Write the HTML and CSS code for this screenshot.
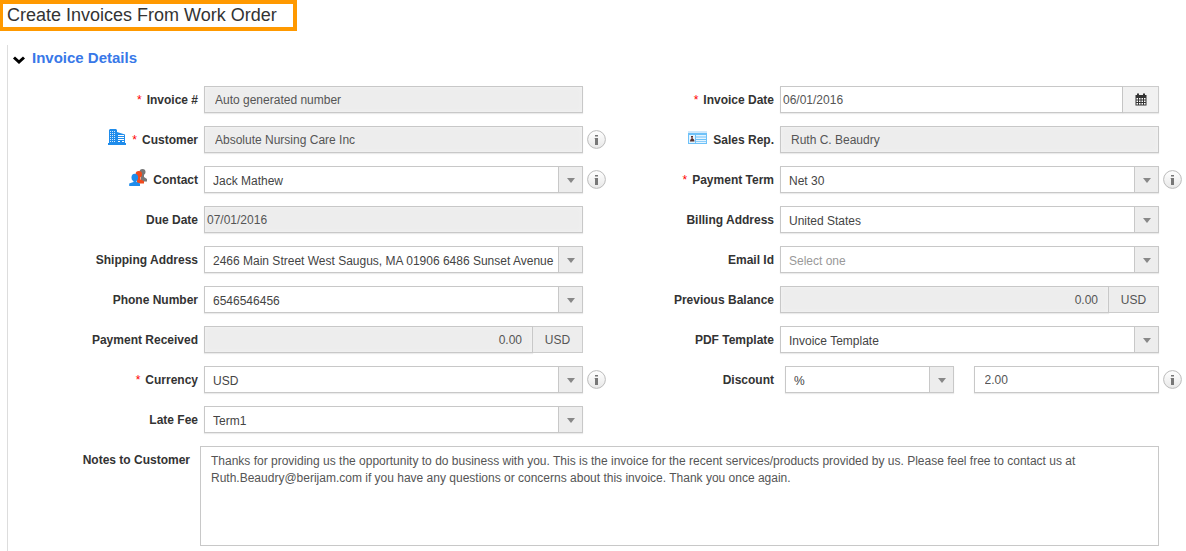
FILE: index.html
```html
<!DOCTYPE html>
<html lang="en">
<head>
  <meta charset="UTF-8" />
  <title>Create Invoices From Work Order</title>
  <link rel="stylesheet" href="styles.css">
</head>
<body>
  <!-- shared icons -->
  <svg class="sprite" aria-hidden="true">
    <defs>
      <linearGradient id="infoFill" x1="0" y1="0" x2="0" y2="1">
        <stop offset="0" stop-color="#ffffff" />
        <stop offset="1" stop-color="#e8e8e8" />
      </linearGradient>
    </defs>
    <symbol id="info" viewBox="0 0 19 19">
      <circle cx="9.5" cy="9.5" r="8.9" fill="url(#infoFill)" stroke="#bbb" stroke-width="1" />
      <path fill="#777" d="M8 5h3v1.500H8zM8 8h3v7H8z" />
      <path fill="#aaa" d="M7.500 8H8v1h-0.500z" />
    </symbol>
  </svg>

  <h1 class="page-title">Create Invoices From Work Order</h1>

  <section class="panel">
    <h2 class="panel-title">
      <svg class="chevron" width="14" height="10" viewBox="0 0 14 10"><path d="M2 2.5l5 4.5 5-4.5" fill="none" stroke="#000" stroke-width="3" /></svg>
      Invoice Details
    </h2>

    <form class="form">
      <div class="field">
        <label for="invoiceNo"><span class="req">*</span>Invoice #</label>
        <input id="invoiceNo" class="control" type="text" value="Auto generated number" readonly>
      </div>
      <div class="field">
        <label for="invoiceDate"><span class="req">*</span>Invoice Date</label>
        <div class="group">
          <input id="invoiceDate" class="control date" type="text" value="06/01/2016">
          <button type="button" class="addon calendar" aria-label="Pick a date">
            <svg width="12" height="13" viewBox="0 0 12 13">
              <path fill="#333" d="M0.5 2h11v10.5h-11zM2 0.5h2V3H2zM8 0.5h2V3H8z" />
              <path fill="#fff" d="M1.5 5h1.5v1.5H1.5zM4 5h1.5v1.5H4zM6.5 5H8v1.5H6.5zM9 5h1.5v1.5H9zM1.5 7.5h1.5v1.5H1.5zM4 7.5h1.5v1.5H4zM6.5 7.5H8v1.5H6.5zM9 7.5h1.5v1.5H9zM1.5 10h1.5v1.5H1.5zM4 10h1.5v1.5H4zM6.5 10H8v1.5H6.5zM9 10h1.5v1.5H9z" />
            </svg>
          </button>
        </div>
      </div>

      <div class="field">
        <label for="customer">
          <svg class="label-icon" width="18" height="16" viewBox="0 0 18 16">
            <path fill="#1f8ceb" d="M1 1l1-1h6l1 1v2l8 2.500V14h1v2H0v-2h1z" />
            <path fill="none" stroke="#fff" stroke-opacity="0.8" stroke-width="1" stroke-dasharray="1 1" d="M2 2.5h6M2 4.5h6M2 6.500h6M2 8.500h6M2 10.500h6M2 12.500h6" />
            <path fill="none" stroke="#fff" stroke-width="1" d="M10 6.500h6M10 8.500h6M10 10.500h6M10 12.500h2M14 12.500h2" />
          </svg>
          <span class="req">*</span>Customer
        </label>
        <input id="customer" class="control" type="text" value="Absolute Nursing Care Inc" readonly>
        <button type="button" class="info" aria-label="Customer info"><svg width="19" height="19"><use href="#info" /></svg></button>
      </div>
      <div class="field">
        <label for="salesRep">
          <svg class="label-icon" width="19" height="13" viewBox="0 0 19 13">
            <path fill="#cfe8fb" d="M0 0h19v2H0z" />
            <path fill="#6ec1f8" d="M0 2h19v11H0z" />
            <path fill="#e3f4ff" d="M1 4h6v8H1zM8 4h10v1.500H8zM8 6.500h10v1.500H8zM8 9h10v1.200H8zM8 11h10v1H8z" />
            <path fill="#533" d="M3 5h2v2.500H3zM2 10.500c0-4 4.500-4 4.500 0z" />
            <path fill="#f0a090" d="M3.500 6h1v1.500h-1z" />
          </svg>
          Sales Rep.
        </label>
        <input id="salesRep" class="control" type="text" value="Ruth C. Beaudry" readonly>
      </div>

      <div class="field">
        <label for="contact">
          <svg class="label-icon" width="18" height="17" viewBox="0 0 18 17">
            <g fill="#777"><circle cx="13.500" cy="3" r="3" /><path d="M12 5h3v3l3 2v2.500h-6z" /></g>
            <g fill="#f04a1d"><circle cx="9.800" cy="5.300" r="3.200" /><path d="M8 8h3.500v2.500l3.500 1.500v2.500H8z" /></g>
            <g fill="#1f8ceb"><ellipse cx="5.800" cy="8.500" rx="3.300" ry="3.800" /><path d="M4.500 11h3v2l3.500 1.500V17H0.200v-2.500L4.500 13z" /></g>
          </svg>
          Contact
        </label>
        <span class="dropdown"><select id="contact"><option>Jack Mathew</option></select></span>
        <button type="button" class="info" aria-label="Contact info"><svg width="19" height="19"><use href="#info" /></svg></button>
      </div>
      <div class="field">
        <label for="paymentTerm"><span class="req">*</span>Payment Term</label>
        <span class="dropdown"><select id="paymentTerm"><option>Net 30</option></select></span>
        <button type="button" class="info" aria-label="Payment term info"><svg width="19" height="19"><use href="#info" /></svg></button>
      </div>

      <div class="field">
        <label for="dueDate">Due Date</label>
        <input id="dueDate" class="control date" type="text" value="07/01/2016" readonly>
      </div>
      <div class="field">
        <label for="billing">Billing Address</label>
        <span class="dropdown"><select id="billing"><option>United States</option></select></span>
      </div>

      <div class="field">
        <label for="shipping">Shipping Address</label>
        <span class="dropdown"><select id="shipping"><option>2466 Main Street West Saugus, MA 01906 6486 Sunset Avenue</option></select></span>
      </div>
      <div class="field">
        <label for="email">Email Id</label>
        <span class="dropdown"><select id="email" class="empty"><option value="">Select one</option></select></span>
      </div>

      <div class="field">
        <label for="phone">Phone Number</label>
        <span class="dropdown"><select id="phone"><option>6546546456</option></select></span>
      </div>
      <div class="field">
        <label for="balance">Previous Balance</label>
        <div class="group">
          <input id="balance" class="control amount" type="text" value="0.00" readonly>
          <span class="addon unit">USD</span>
        </div>
      </div>

      <div class="field">
        <label for="received">Payment Received</label>
        <div class="group">
          <input id="received" class="control amount" type="text" value="0.00" readonly>
          <span class="addon unit">USD</span>
        </div>
      </div>
      <div class="field">
        <label for="template">PDF Template</label>
        <span class="dropdown"><select id="template"><option>Invoice Template</option></select></span>
      </div>

      <div class="field">
        <label for="currency"><span class="req">*</span>Currency</label>
        <span class="dropdown"><select id="currency"><option>USD</option></select></span>
        <button type="button" class="info" aria-label="Currency info"><svg width="19" height="19"><use href="#info" /></svg></button>
      </div>
      <div class="field">
        <label for="discountType">Discount</label>
        <div class="discount">
          <span class="dropdown"><select id="discountType"><option>%</option></select></span>
          <input class="control" type="text" value="2.00" aria-label="Discount value">
        </div>
        <button type="button" class="info" aria-label="Discount info"><svg width="19" height="19"><use href="#info" /></svg></button>
      </div>

      <div class="field">
        <label for="lateFee">Late Fee</label>
        <span class="dropdown"><select id="lateFee"><option>Term1</option></select></span>
      </div>

      <div class="field notes">
        <label for="notes">Notes to Customer</label>
        <textarea id="notes">Thanks for providing us the opportunity to do business with you. This is the invoice for the recent services/products provided by us. Please feel free to contact us at Ruth.Beaudry@berijam.com if you have any questions or concerns about this invoice. Thank you once again.</textarea>
      </div>
    </form>
  </section>
</body>
</html>
```
FILE: styles.css
```css
* {
  box-sizing: border-box;
}

body {
  margin: 0;
  background: #fff;
  color: #333;
  font-family: "Liberation Sans", Arial, sans-serif;
  font-size: 12px;
}

.sprite {
  display: block;
  width: 0;
  height: 0;
}

.page-title {
  width: fit-content;
  margin: 0;
  padding: 0 16px 1px 4px;
  border: 4px solid #ff9900;
  border-left-width: 3px;
  font-size: 18px;
  font-weight: normal;
  line-height: 22px;
}

.panel {
  margin: 14px 0 0 7px;
  padding-bottom: 16px;
  border-left: 1px solid #ddd;
}

.panel-title {
  display: flex;
  align-items: center;
  gap: 6px;
  margin: 0;
  padding: 3px 0 0 4px;
  color: #3878e8;
  font-size: 15px;
  line-height: 20px;
}

.chevron {
  margin-top: 4px;
}

.form {
  display: grid;
  grid-template-columns: 1fr 1fr;
  row-gap: 13px;
  padding: 18px 2px 0 24px;
}

.field {
  display: grid;
  grid-template-columns: 172px minmax(0, 1fr) 25px;
  align-items: center;
}

label {
  display: flex;
  justify-content: flex-end;
  align-items: center;
  padding-right: 6px;
  font-weight: bold;
  line-height: 16px;
  white-space: nowrap;
}

.req {
  margin-right: 5px;
  color: #f00;
  font-weight: normal;
}

.label-icon {
  margin: 0 6px 5px 0;
}

.control,
select,
textarea {
  width: 100%;
  min-width: 0;
  margin: 0;
  border: 1px solid #c8c8c8;
  border-radius: 0;
  background-color: #fff;
  box-shadow: 0 1px 1px rgba(0, 0, 0, 0.08);
  color: #555;
  font: inherit;
  outline: none;
}

.control,
select {
  height: 27px;
}

.control {
  padding: 0 10px;
}

.control[readonly] {
  background-color: #ededed;
  box-shadow: inset 0 0 4px #f4f4f4, 0 1px 1px rgba(0, 0, 0, 0.08);
}

.control.date {
  padding: 0 2px;
}

.control.amount {
  text-align: right;
}

.dropdown {
  display: grid;
  align-items: center;
}

.dropdown select,
.dropdown::after {
  grid-area: 1 / 1;
}

.dropdown select {
  appearance: none;
  padding: 2px 24px 0 8px;
  background: linear-gradient(90deg, #c8c8c8 1px, #ededed 1px) right / 24px 100% no-repeat #fff;
  color: #444;
}

.dropdown select.empty {
  color: #999;
}

.dropdown::after {
  content: "";
  justify-self: end;
  margin: 2px 8px 0 0;
  border: 4px solid transparent;
  border-top: 5px solid #888;
  border-bottom: 0;
  pointer-events: none;
}

.group {
  display: flex;
}

.addon {
  display: flex;
  flex: none;
  justify-content: center;
  align-items: center;
  height: 27px;
  padding: 0;
  border: 1px solid #ccc;
  border-left: 0;
  background: #ededed;
  color: #555;
}

.calendar {
  width: 36px;
  background: #f1f1f1;
  box-shadow: 0 1px 1px rgba(0, 0, 0, 0.08);
}

.unit {
  width: 50px;
}

.info {
  width: 19px;
  height: 19px;
  margin-left: 4px;
  padding: 0;
  border: 0;
  background: none;
}

.info svg {
  display: block;
}

.discount {
  display: grid;
  grid-template-columns: 10fr 11fr;
  gap: 20px;
  padding-left: 5px;
}

.notes {
  grid-column: 1 / -1;
  grid-template-columns: 168px minmax(0, 1fr) 25px;
  align-items: start;
}

.notes label {
  padding: 6px 10px 0 0;
}

textarea {
  display: block;
  height: 100px;
  padding: 6px 10px;
  box-shadow: none;
  line-height: 17px;
  resize: none;
}
```
